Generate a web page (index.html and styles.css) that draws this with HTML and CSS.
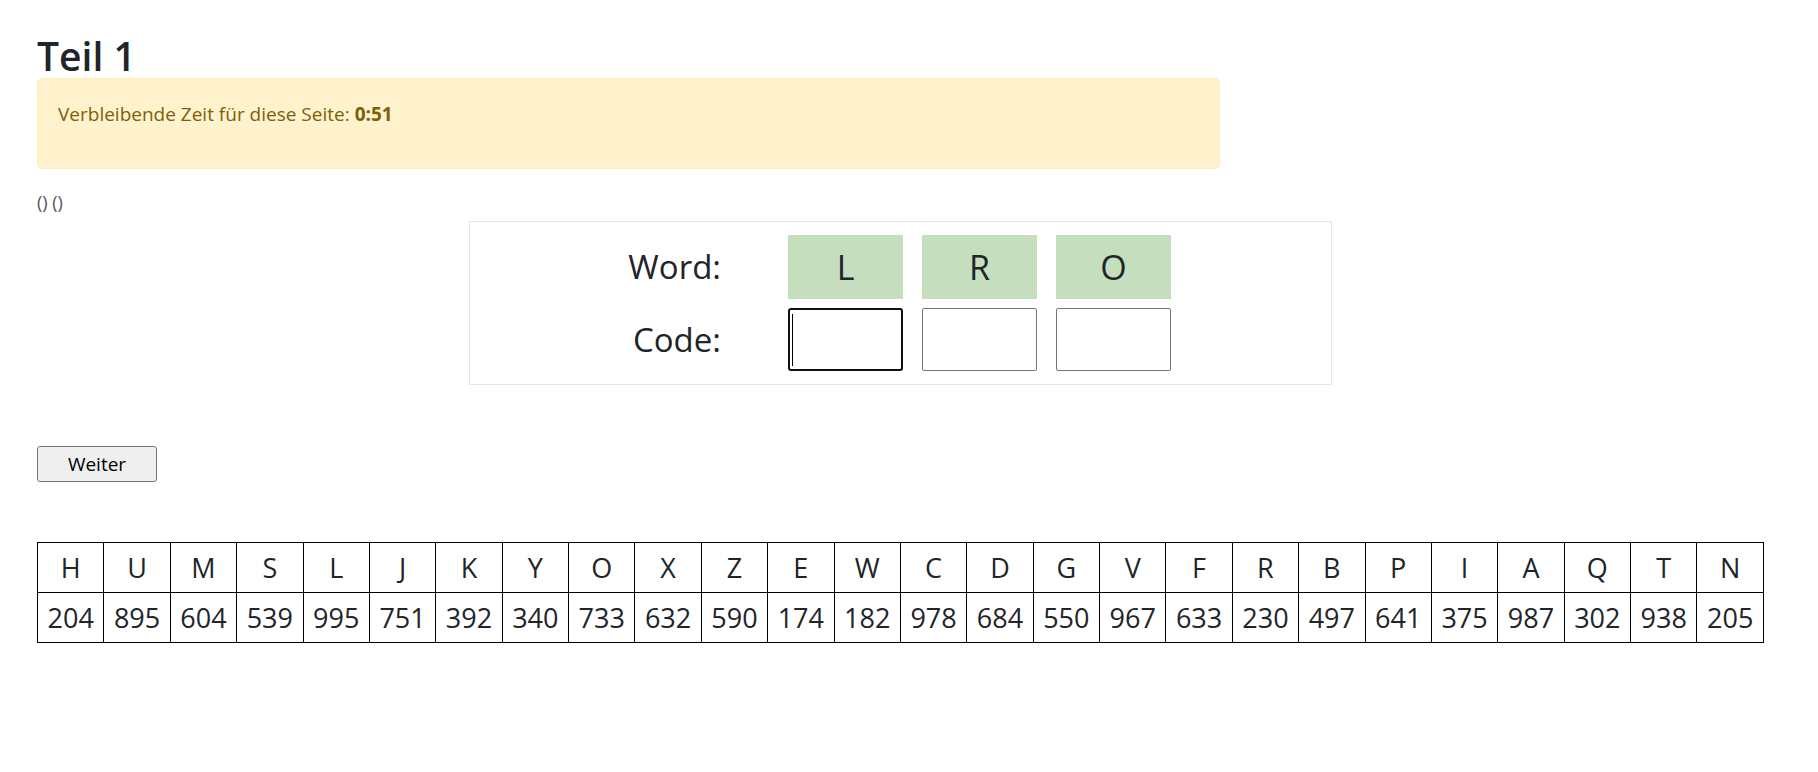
FILE: index.html
```html
<!DOCTYPE html>
<html lang="de">
<head>
<meta charset="utf-8">
<title>Teil 1</title>
<link rel="stylesheet" href="styles.css">
</head>
<body>
<div class="page">
  <h2 class="title">Teil 1</h2>
  <div class="alert">
    <p class="alert-text">Verbleibende Zeit für diese Seite: <b>0:51</b></p>
  </div>
  <div class="meta">() ()</div>
  <div class="wordbox">
    <div class="grid">
      <div class="label">Word:</div>
      <div class="letter">L</div>
      <div class="letter">R</div>
      <div class="letter">O</div>
      <div class="label">Code:</div>
      <div class="code-wrap"><input class="code focused" type="text"><span class="caret"></span></div>
      <div class="code-wrap"><input class="code" type="text"></div>
      <div class="code-wrap"><input class="code" type="text"></div>
    </div>
  </div>
  <button class="next" type="button">Weiter</button>
  <table class="key">
    <tr>
      <td>H</td><td>U</td><td>M</td><td>S</td><td>L</td><td>J</td><td>K</td><td>Y</td><td>O</td><td>X</td><td>Z</td><td>E</td><td>W</td><td>C</td><td>D</td><td>G</td><td>V</td><td>F</td><td>R</td><td>B</td><td>P</td><td>I</td><td>A</td><td>Q</td><td>T</td><td>N</td>
    </tr>
    <tr>
      <td>204</td><td>895</td><td>604</td><td>539</td><td>995</td><td>751</td><td>392</td><td>340</td><td>733</td><td>632</td><td>590</td><td>174</td><td>182</td><td>978</td><td>684</td><td>550</td><td>967</td><td>633</td><td>230</td><td>497</td><td>641</td><td>375</td><td>987</td><td>302</td><td>938</td><td>205</td>
    </tr>
  </table>
</div>
</body>
</html>
```
FILE: styles.css
```css
* { box-sizing: border-box; }

body {
  margin: 0;
  font-family: "Open Sans", "Noto Sans", "Liberation Sans", sans-serif;
  color: #212529;
  background: #fff;
}

.page {
  width: 1727px;
  margin-left: 37px;
}

.title {
  margin: 33px 0 0;
  font-size: 39px;
  line-height: 45px;
  font-weight: 600;
  color: #212529;
}

.alert {
  width: 1183px;
  background: #fff3cd;
  border: 1px solid #ffeeba;
  border-radius: 5px;
  padding: 20px 20px 19px;
  color: #7d5f0a;
}

.alert-text {
  margin: 0 0 20px;
  font-size: 19px;
  line-height: 30px;
}

.alert-text b { font-weight: 700; }

.meta {
  margin-top: 21px;
  font-size: 18px;
  line-height: 24px;
  color: #555;
}

.wordbox {
  width: 863px;
  margin: 7px auto 0;
  border: 1px solid #e5e5e5;
  padding: 13px 0 13px;
}

.grid {
  display: grid;
  grid-template-columns: 299px 115px 115px 115px;
  grid-template-rows: 64px 63px;
  column-gap: 19px;
  row-gap: 9px;
}

.label {
  align-self: center;
  text-align: right;
  padding-right: 48px;
  font-size: 33px;
  line-height: 40px;
}

.letter {
  background: #c5dfbe;
  display: flex;
  align-items: center;
  justify-content: center;
  font-size: 34px;
}

.code-wrap {
  position: relative;
  display: flex;
}

.code {
  width: 100%;
  height: 100%;
  margin: 0;
  border: 1px solid #767676;
  border-radius: 2px;
  background: #fff;
  font-size: 30px;
  outline: none;
}

.code.focused {
  border: 2px solid #101010;
  border-radius: 3px;
}

.caret {
  position: absolute;
  left: 4px;
  top: 6px;
  width: 1px;
  height: 52px;
  background: #000;
}

.next {
  display: block;
  margin-top: 61px;
  width: 120px;
  height: 36px;
  padding: 0;
  background: #efefef;
  border: 1px solid #767676;
  border-radius: 3px;
  font-family: "Open Sans", "Noto Sans", sans-serif;
  font-size: 19px;
  color: #000;
}

.key {
  margin-top: 60px;
  width: 1727px;
  border-collapse: collapse;
  table-layout: fixed;
  font-size: 27px;
}

.key td {
  border: 1px solid #000;
  height: 50px;
  padding: 0;
  text-align: center;
  vertical-align: middle;
}
```
